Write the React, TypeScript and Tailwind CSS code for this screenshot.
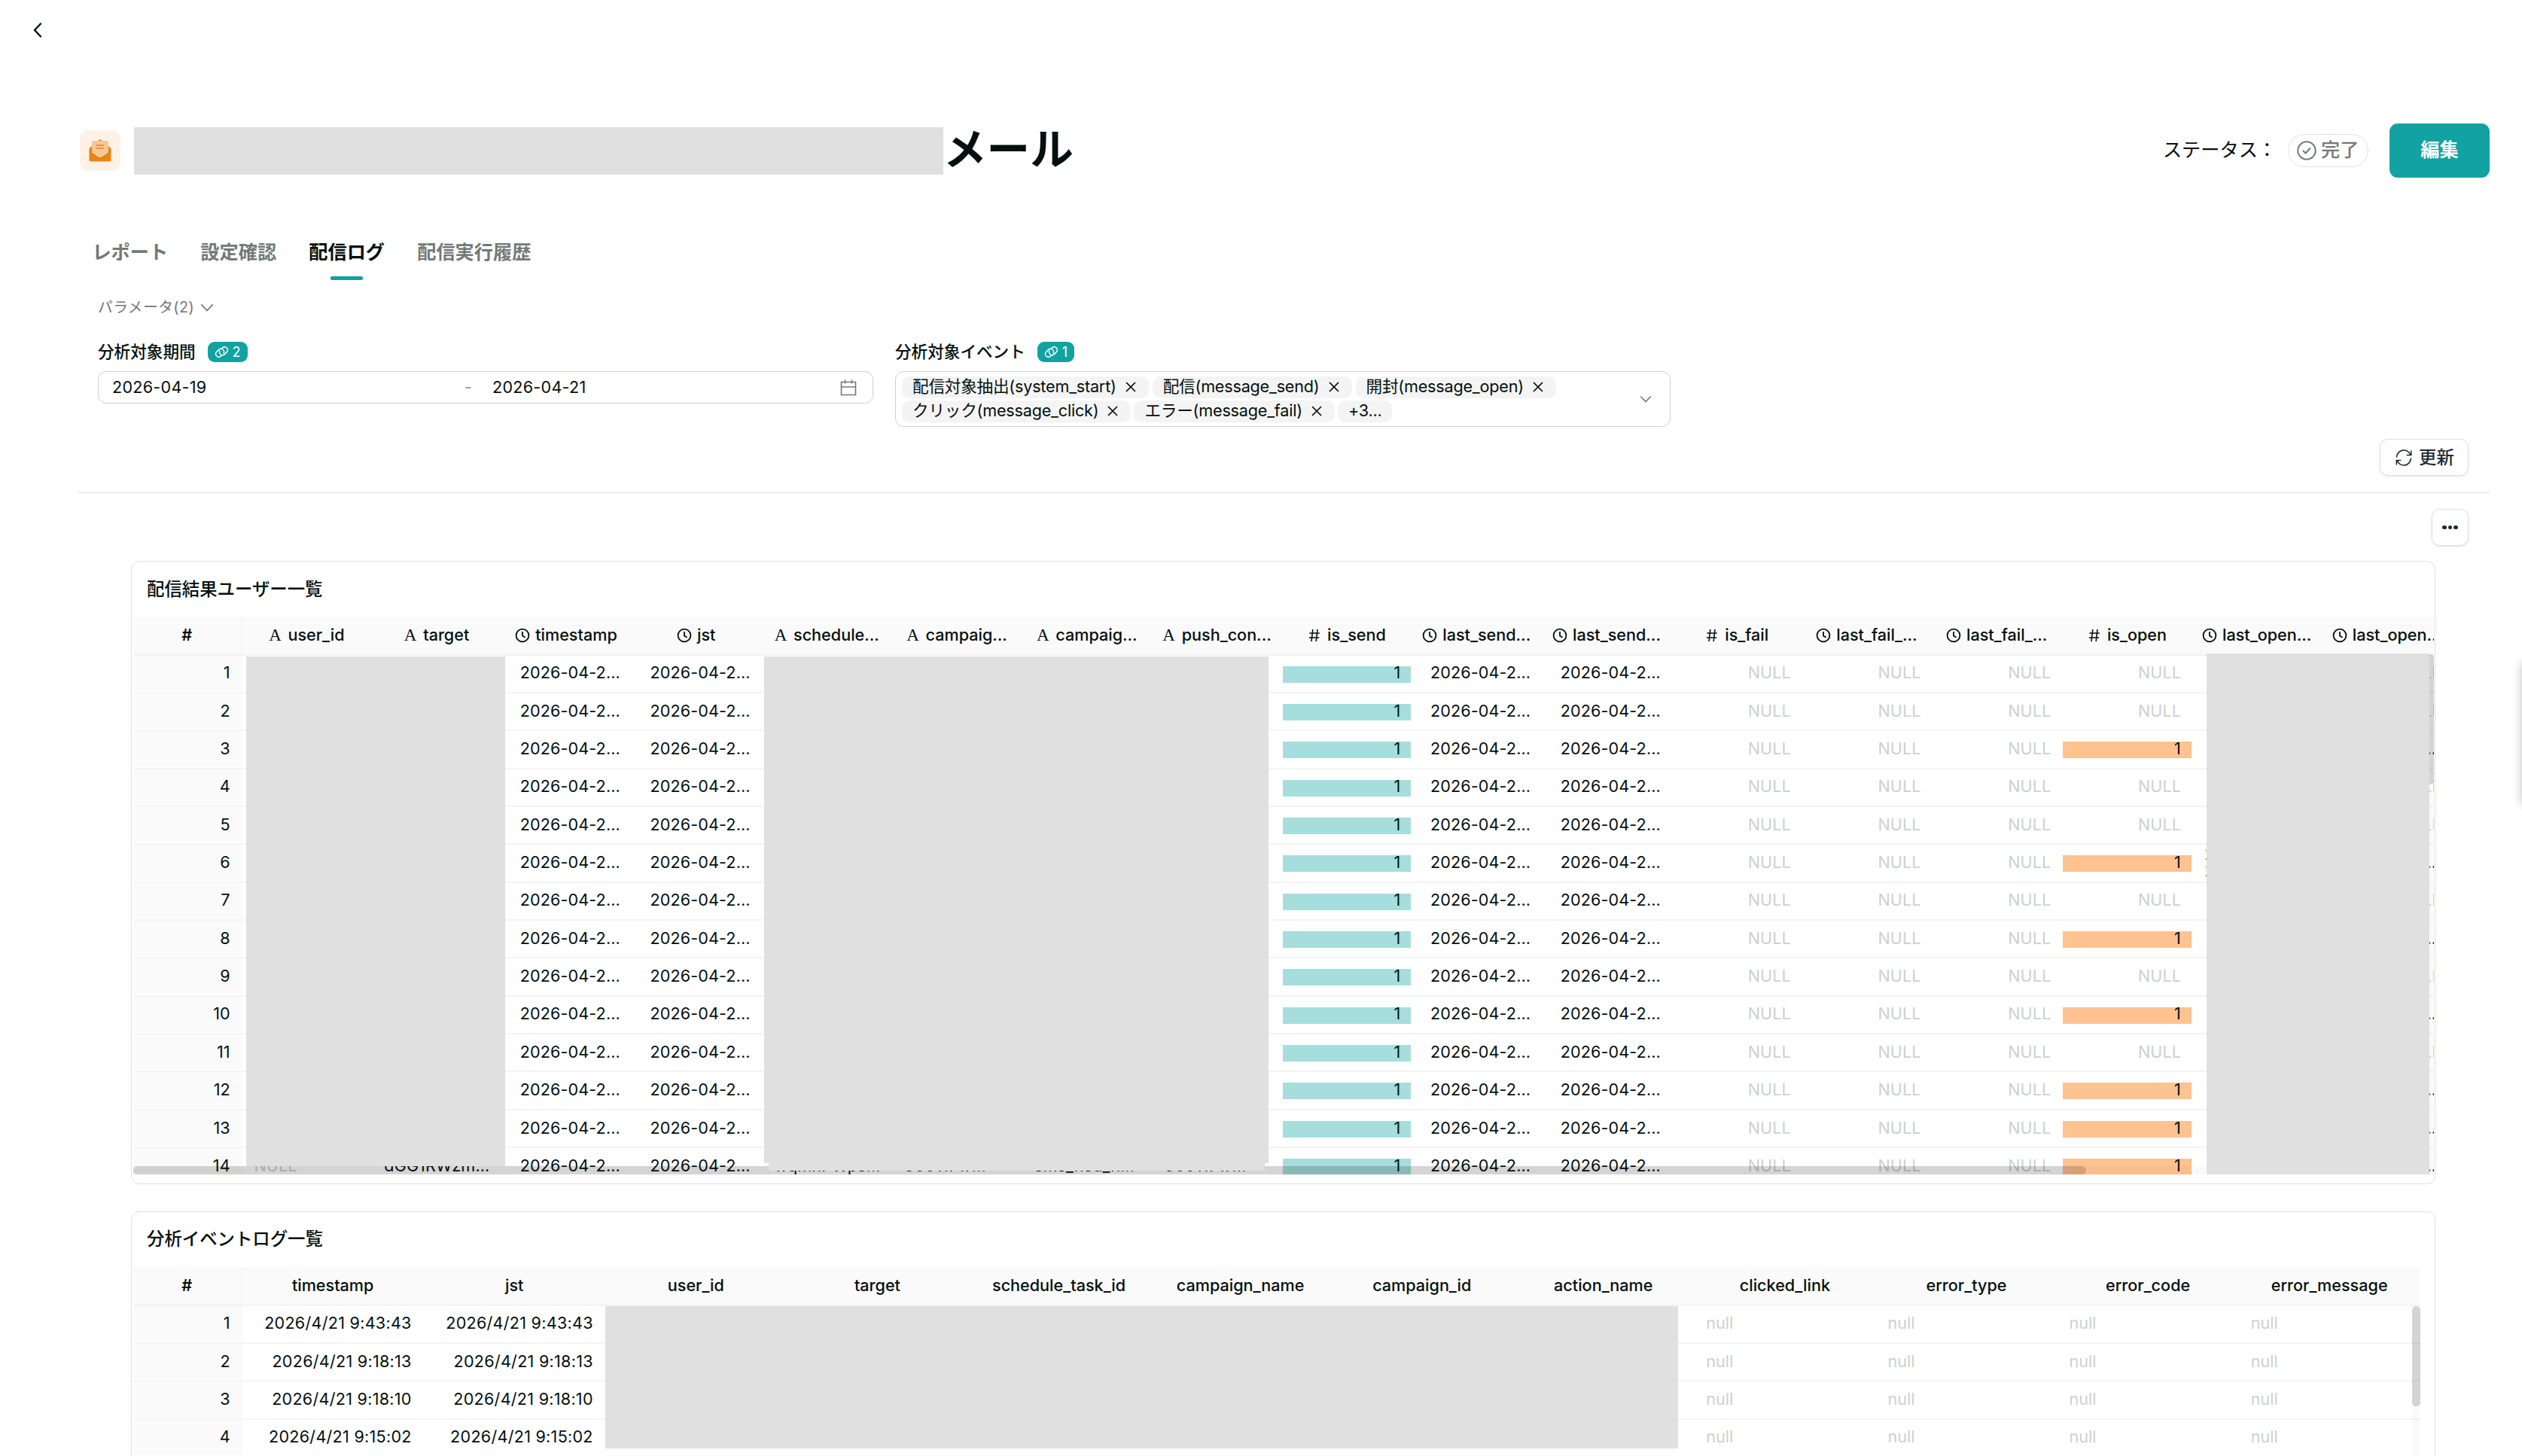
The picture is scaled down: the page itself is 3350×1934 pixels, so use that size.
import type { ReactNode } from 'react';
import clsx from 'clsx';

type ColumnKind = 'text' | 'time' | 'number';

interface Column {
  label: string;
  kind: ColumnKind;
}

const userColumns: Column[] = [
  { label: 'user_id', kind: 'text' },
  { label: 'target', kind: 'text' },
  { label: 'timestamp', kind: 'time' },
  { label: 'jst', kind: 'time' },
  { label: 'schedule...', kind: 'text' },
  { label: 'campaig...', kind: 'text' },
  { label: 'campaig...', kind: 'text' },
  { label: 'push_con...', kind: 'text' },
  { label: 'is_send', kind: 'number' },
  { label: 'last_send...', kind: 'time' },
  { label: 'last_send...', kind: 'time' },
  { label: 'is_fail', kind: 'number' },
  { label: 'last_fail_...', kind: 'time' },
  { label: 'last_fail_...', kind: 'time' },
  { label: 'is_open', kind: 'number' },
  { label: 'last_open...', kind: 'time' },
  { label: 'last_open...', kind: 'time' },
];

const openedRows = [3, 6, 8, 10, 12, 13, 14];
const DATE = '2026-04-2...';

const userRows = Array.from({ length: 14 }, (_, i) => {
  const no = i + 1;
  const opened = openedRows.includes(no);
  const last = no === 14;
  return {
    no,
    cells: [
      last ? 'NULL' : '',
      last ? 'dGG1RWzm...' : '',
      DATE,
      DATE,
      last ? 'wqmnPWps...' : '',
      last ? '30011717...' : '',
      last ? 'sms_nsd_n...' : '',
      last ? '30011717...' : '',
      '1',
      DATE,
      DATE,
      'NULL',
      'NULL',
      'NULL',
      opened ? '1' : 'NULL',
      no === 6 ? '2026-04-21...' : opened ? DATE : 'NULL',
      opened ? DATE : 'NULL',
    ],
  };
});

const eventColumns = [
  'timestamp',
  'jst',
  'user_id',
  'target',
  'schedule_task_id',
  'campaign_name',
  'campaign_id',
  'action_name',
  'clicked_link',
  'error_type',
  'error_code',
  'error_message',
];

const eventRows = ['2026/4/21 9:43:43', '2026/4/21 9:18:13', '2026/4/21 9:18:10', '2026/4/21 9:15:02'];

const tabs = ['レポート', '設定確認', '配信ログ', '配信実行履歴'];

function ClockIcon() {
  return (
    <svg viewBox="0 0 20 20" className="w-5 h-5 shrink-0" fill="none" stroke="currentColor" strokeWidth="1.8">
      <circle cx="10" cy="10" r="8.4" />
      <path d="M10 5v5.4l3.6 2.4" />
    </svg>
  );
}

function HashIcon() {
  return (
    <svg viewBox="0 0 20 20" className="w-5 h-5 shrink-0" fill="none" stroke="currentColor" strokeWidth="1.6">
      <path d="M7.8 2 6 18M14 2l-1.8 16M3.4 7h13.4M2.8 13h13.4" />
    </svg>
  );
}

function ColumnIcon({ kind }: { kind: ColumnKind }) {
  if (kind === 'time') return <ClockIcon />;
  if (kind === 'number') return <HashIcon />;
  return (
    <span className="w-5 shrink-0 text-center font-['Liberation_Serif',serif] text-[23px] leading-5">A</span>
  );
}

function ChevronDown({ className }: { className?: string }) {
  return (
    <svg viewBox="0 0 20 12" className={className} fill="none" stroke="currentColor" strokeWidth="1.9">
      <path d="M1.5 1.5 10 10.5l8.5-9" />
    </svg>
  );
}

function MailIcon() {
  return (
    <svg viewBox="0 0 30 30" className="w-[30px] h-[30px]">
      <path d="M11.5 2.3 15 0l3.5 2.3z" fill="#e98613" />
      <path d="M5 8 .5 12v5L5 17zM25 8l4.5 4v5H25z" fill="#e98613" />
      <path d="M4 4a2 2 0 0 1 2-2h18a2 2 0 0 1 2 2v12L15 24 4 16z" fill="#f6c698" />
      <path d="M10 8h10M10 12h10" stroke="#e98613" strokeWidth="1.5" />
      <path d="M.5 14.5 13 23.3a3.5 3.5 0 0 0 4 0l12.5-8.8V27a2.5 2.5 0 0 1-2.5 2.5H3A2.5 2.5 0 0 1 .5 27z" fill="#e98613" />
    </svg>
  );
}

function LinkBadge({ count }: { count: number }) {
  return (
    <span className="inline-flex items-center h-[27px] px-[9px] gap-[5px] rounded-[9px] bg-[#12a2a2] text-white text-[18px]">
      <svg viewBox="0 0 20 18" className="w-[19px] h-[17px]" fill="none" stroke="currentColor" strokeWidth="1.5">
        <path d="M10.5 13.2 8.5 15.2a4.3 4.3 0 0 1-6-6L6 5.7a4.3 4.3 0 0 1 6.6 5.3" />
        <path d="M9.5 4.8 11.5 2.8a4.3 4.3 0 0 1 6 6L14 12.3A4.3 4.3 0 0 1 7.4 7" />
      </svg>
      {count}
    </span>
  );
}

function Tag({ children, closable = true }: { children: ReactNode; closable?: boolean }) {
  return (
    <span className="inline-flex items-center h-[29px] px-[14px] rounded-[10px] bg-[#f4f4f4] whitespace-nowrap tracking-[-0.2px]">
      {children}
      {closable && (
        <svg viewBox="0 0 14 14" className="w-[14px] h-[14px] ml-[12px] mr-[3px]" stroke="currentColor" strokeWidth="1.7">
          <path d="m1 1 12 12M13 1 1 13" />
        </svg>
      )}
    </span>
  );
}

// Grey block that hides private values
function Mask({ className }: { className: string }) {
  return <div className={clsx('absolute bg-[#e0e0e0]', className)} />;
}

function IndexCell({ children, head = false }: { children: ReactNode; head?: boolean }) {
  return (
    <div
      className={clsx(
        'w-[144.6px] shrink-0 flex items-center bg-[#fafafa]',
        head ? 'justify-center font-semibold border-r-2 border-[#f5f5f5]' : 'justify-end pr-[16px]',
      )}
    >
      {children}
    </div>
  );
}

function UserCell({ value, index }: { value: string; index: number }) {
  const bar = value === '1';
  const isText = userColumns[index].kind === 'text';
  return (
    <div
      className={clsx(
        'relative w-[172.75px] shrink-0 flex items-center px-[16px]',
        isText ? 'justify-start' : 'justify-end',
        value === 'NULL' ? 'text-[#cdd1d0]' : 'tracking-[0.1px]',
      )}
    >
      {bar && (
        <div
          className={clsx(
            'absolute left-0 right-[2px] top-[14px] h-[22px]',
            index === 8 ? 'bg-[#a5dedd]' : 'bg-[#ffc291]',
          )}
        />
      )}
      <span className="relative">{value}</span>
    </div>
  );
}

function UserTable() {
  return (
    <section className="shrink-0 mt-5 ml-[174px] w-[3061px] h-[828px] border border-[#e0e0e0] rounded-[11px]">
      <h2 className="h-[73px] pl-[20px] text-[23.4px] font-medium leading-[73px]">配信結果ユーザー一覧</h2>
      <div className="relative ml-[2px] mr-px h-[741px] overflow-hidden">
        <div className="flex h-[51.5px] bg-[#fafafa] border-b-2 border-[#f2f2f2]">
          <IndexCell head>#</IndexCell>
          {userColumns.map((column, i) => (
            <div key={i} className="w-[172.75px] shrink-0 flex items-center justify-center gap-[7px] pr-[3px] whitespace-nowrap font-medium">
              <ColumnIcon kind={column.kind} />
              {column.label}
            </div>
          ))}
        </div>
        {userRows.map((row) => (
          <div key={row.no} className="flex w-[3300px] h-[50.35px] pb-px border-b-2 border-[#f4f4f4]">
            <IndexCell>{row.no}</IndexCell>
            {row.cells.map((value, i) => (
              <UserCell key={i} value={value} index={i} />
            ))}
          </div>
        ))}

        {/* Scrollbars */}
        <div className="absolute right-0 top-[50px] bottom-0 w-[10px] bg-black/[0.02]" />
        <div className="absolute right-0 top-[50px] w-[10px] h-[173px] rounded-[5px] bg-black/15" />
        <div className="absolute left-0 right-0 bottom-0 h-[11px] bg-black/[0.02]" />
        <div className="absolute left-0 bottom-0 w-[2594px] h-[11px] rounded-[5px] bg-black/15" />

        <Mask className="left-[150px] top-[53px] w-[344px] h-[677px]" />
        <Mask className="left-[838px] top-[53px] w-[670px] h-[673px]" />
        <Mask className="left-[844px] top-[726px] w-[659px] h-[10px]" />
        <Mask className="left-[2754px] top-[49px] w-[296px] h-[692px]" />
      </div>
    </section>
  );
}

function EventTable() {
  return (
    <section className="mt-9 ml-[174px] w-[3061px] h-[500px] shrink-0 border border-[#e0e0e0] rounded-[11px]">
      <h2 className="h-[73px] pl-[20px] text-[23.4px] font-medium leading-[72px]">分析イベントログ一覧</h2>
      <div className="relative ml-[2px] w-[3038px]">
        <div className="flex h-[51.5px] bg-[#fafafa] border-b-2 border-[#f2f2f2]">
          <IndexCell head>#</IndexCell>
          {eventColumns.map((label) => (
            <div key={label} className="w-[241.1px] shrink-0 flex items-center justify-center font-medium">
              {label}
            </div>
          ))}
        </div>
        {eventRows.map((date, i) => (
          <div key={date} className="flex h-[50.35px] pb-px border-b-2 border-[#f4f4f4]">
            <IndexCell>{i + 1}</IndexCell>
            {eventColumns.map((label, col) => (
              <div
                key={label}
                className={clsx(
                  'w-[241.1px] shrink-0 flex items-center px-[16px]',
                  col < 2 ? 'justify-end tracking-[0.25px]' : 'text-[#cdd1d0]',
                )}
              >
                {col < 2 ? date : col > 7 ? 'null' : ''}
              </div>
            ))}
          </div>
        ))}
        <div className="absolute right-0 top-[52px] w-[11px] h-[300px] bg-black/[0.02]" />
        <div className="absolute right-0 top-[52px] w-[11px] h-[133px] rounded-[5px] bg-black/15" />
        <Mask className="left-[627px] top-[52px] w-[1425px] h-[189px]" />
      </div>
    </section>
  );
}

export default function App() {
  return (
    <div className="relative flex flex-col w-[3350px] h-[1934px] overflow-hidden bg-white text-[#03100e] text-[21.6px] leading-none font-['Inter','Noto_Sans_CJK_JP',sans-serif]">
      <div className="h-[164px] shrink-0 pl-[43px] pt-[30px]">
        <svg viewBox="0 0 12 20" className="w-[13px] h-[20px]" fill="none" stroke="currentColor" strokeWidth="2.4" strokeLinecap="round" strokeLinejoin="round">
          <path d="M10.5 1.5 2.5 10l8 8.5" />
        </svg>
      </div>

      {/* Title */}
      <header className="flex items-center h-[72px] shrink-0 ml-[106px] mr-[43px]">
        <div className="flex items-center justify-center w-[54px] h-[54px] rounded-[11px] bg-[#fef2e7]">
          <MailIcon />
        </div>
        <div className="ml-[18px] w-[1075px] h-[63px] bg-[#e0e0e0]" />
        <h1 className="text-[57.6px] font-bold leading-[68px] pb-[4px]">メール</h1>
        <div className="flex items-center ml-auto text-[25.2px]">
          <span>ステータス：</span>
          <span className="flex items-center h-[44px] w-[107px] ml-[15px] pl-[11px] gap-[6px] rounded-full border border-[#e0e0e0] font-medium text-[#727a78]">
            <svg viewBox="0 0 26 26" className="w-[26px] h-[26px]" fill="none" stroke="currentColor" strokeWidth="2">
              <circle cx="13" cy="13" r="11.7" />
              <path d="m8 13 3.5 3.5 6.5-7" />
            </svg>
            完了
          </span>
          <button className="ml-[28px] w-[133px] h-[72px] rounded-[11px] bg-[#12a2a2] text-white font-bold">編集</button>
        </div>
      </header>

      {/* Tabs */}
      <nav className="flex shrink-0 gap-[43.2px] mt-20 ml-[122.4px] h-[56px]">
        {tabs.map((tab) => (
          <div
            key={tab}
            className={clsx(
              'flex flex-col items-center justify-between text-[25.2px] leading-[39px] font-bold',
              tab !== '配信ログ' && 'text-[#727a78]',
            )}
          >
            {tab}
            {tab === '配信ログ' && <span className="w-[43px] h-[5px] rounded-[2px] bg-[#12a2a2]" />}
          </div>
        ))}
      </nav>

      {/* Parameters */}
      <div className="flex shrink-0 items-center mt-[23px] ml-[130px] h-[27px] text-[19.8px] tracking-[0.4px] text-[#757575]">
        パラメータ(2)
        <ChevronDown className="ml-[8px] w-[18px] h-[11px]" />
      </div>
      <div className="flex shrink-0 mt-[32px] ml-[130px] gap-[29px] h-[114px]">
        <div className="w-[1030px]">
          <div className="flex items-center gap-[16px] h-[27px]">
            <span className="font-medium">分析対象期間</span>
            <LinkBadge count={2} />
          </div>
          <div className="flex items-center mt-3 h-[43px] pl-[18px] pr-[21px] border border-[#d0d0d0] rounded-[11px] tracking-[0.25px]">
            <span className="w-[468px]">2026-04-19</span>
            <span className="w-[37px] text-[#8a94a0]">-</span>
            <span>2026-04-21</span>
            <svg viewBox="0 0 22 22" className="ml-auto w-[22px] h-[22px] text-[#757575]" fill="none" stroke="currentColor" strokeWidth="1.6">
              <path d="M1.5 3.5h19v17h-19zM1.5 10h19M6.5 .5v5M15.5 .5v5" />
            </svg>
          </div>
        </div>
        <div className="w-[1030px]">
          <div className="flex items-center gap-[16px] h-[27px]">
            <span className="font-medium">分析対象イベント</span>
            <LinkBadge count={1} />
          </div>
          <div className="flex items-center justify-between mt-3 h-[74px] pl-[8px] pr-[24px] border border-[#d0d0d0] rounded-[11px]">
            <div className="flex flex-col gap-[3px]">
              <div className="flex gap-[5px]">
                <Tag>配信対象抽出(system_start)</Tag>
                <Tag>配信(message_send)</Tag>
                <Tag>開封(message_open)</Tag>
              </div>
              <div className="flex gap-[4px]">
                <Tag>クリック(message_click)</Tag>
                <Tag>エラー(message_fail)</Tag>
                <Tag closable={false}>+3...</Tag>
              </div>
            </div>
            <ChevronDown className="w-[16px] h-[10px] text-[#757575]" />
          </div>
        </div>
      </div>

      <button className="flex shrink-0 items-center self-end mt-[15px] mr-[71px] w-[118px] h-[49px] pl-[20px] gap-[9px] rounded-[11px] border border-[#e0e0e0] shadow-sm text-[23.4px] font-medium text-[#1f2937]">
        <svg viewBox="0 0 22 22" className="w-[22px] h-[22px]" fill="none" stroke="currentColor" strokeWidth="1.6">
          <path d="M1.5 10.5A9.5 9.5 0 0 1 20 7.5M20.5 11.5A9.5 9.5 0 0 1 2 14.5M20.7 1.5v6h-6M1.3 20.5v-6h6" />
        </svg>
        更新
      </button>
      <div className="shrink-0 mt-[22px] ml-[103px] mr-[43px] h-px bg-[#e0e0e0]" />
      <button className="flex shrink-0 items-center justify-center self-end gap-[2px] mt-[21px] mr-[71px] w-[49px] h-[49px] rounded-[11px] border border-[#e0e0e0] shadow-sm">
        {[0, 1, 2].map((dot) => (
          <span key={dot} className="w-[5.5px] h-[5.5px] rounded-full bg-[#1f2937]" />
        ))}
      </button>

      <UserTable />
      <EventTable />

      {/* Edge of the drawer handle */}
      <div className="absolute left-[3350px] top-[880px] w-[40px] h-[188px] shadow-[0_0_14px_rgba(0,0,0,0.25)]" />
    </div>
  );
}
